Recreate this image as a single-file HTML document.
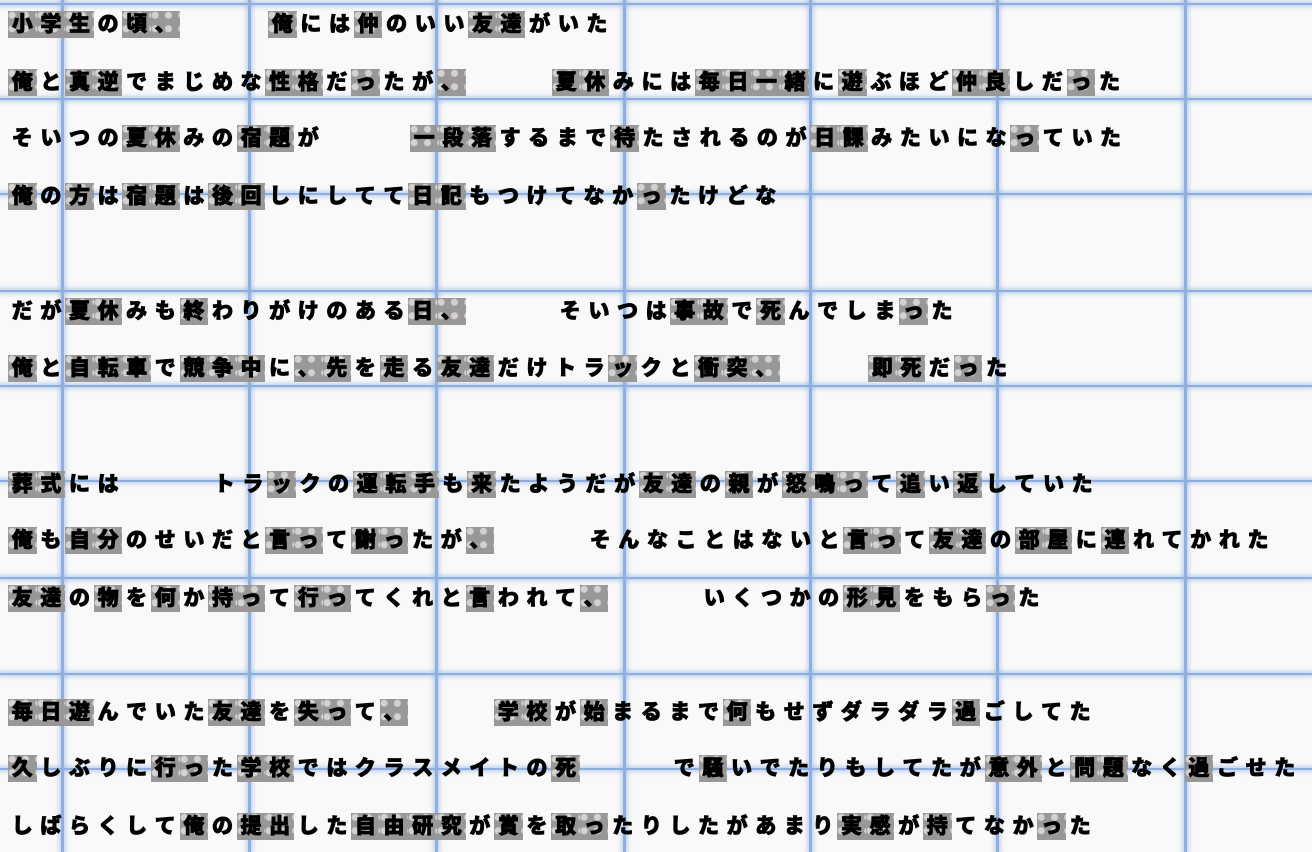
<!DOCTYPE html>
<html><head><meta charset="utf-8"><style>
html,body{margin:0;padding:0}
body{width:1312px;height:852px;overflow:hidden;position:relative;background:#f9f9f9;font-family:"Liberation Sans","Noto Sans CJK JP",sans-serif;}
.v,.h{position:absolute;background:#8eaee0;box-shadow:0 0 4px 2px rgba(150,180,225,.55)}
.v{top:0;bottom:0;width:3px}
.h{left:0;right:0;height:2px}
.row{position:absolute;height:27px;white-space:nowrap;font-size:21px;font-weight:900;color:#000}
.row span{display:inline-block;width:28.6px;height:27px;line-height:27px;text-align:center;vertical-align:top;-webkit-text-stroke:0.8px #000}
.row span.k{background-color:#9a9896;background-image:radial-gradient(circle,#d4d2d0 0,#d4d2d0 3px,rgba(0,0,0,0) 4px);background-size:13.3px 13.5px;background-position:-2.5px -2.5px}
.row span.k b{position:relative;color:#000;font-weight:900}
</style></head><body>
<div class="v" style="left:61px"></div>
<div class="v" style="left:248px"></div>
<div class="v" style="left:435px"></div>
<div class="v" style="left:623px"></div>
<div class="v" style="left:809px"></div>
<div class="v" style="left:996px"></div>
<div class="v" style="left:1184px"></div>
<div class="h" style="top:3px"></div>
<div class="h" style="top:98px"></div>
<div class="h" style="top:193px"></div>
<div class="h" style="top:290px"></div>
<div class="h" style="top:385px"></div>
<div class="h" style="top:480px"></div>
<div class="h" style="top:577px"></div>
<div class="h" style="top:673px"></div>
<div class="h" style="top:768px"></div>

<div class="row" style="top:11px;left:8px">小学生の頃、</div>
<div class="row" style="top:11px;left:268px">俺には仲のいい友達がいた</div>
<div class="row" style="top:69px;left:8px">俺と真逆でまじめな性格だったが、</div>
<div class="row" style="top:69px;left:552px">夏休みには毎日一緒に遊ぶほど仲良しだった</div>
<div class="row" style="top:125px;left:8px">そいつの夏休みの宿題が</div>
<div class="row" style="top:125px;left:410px">一段落するまで待たされるのが日課みたいになっていた</div>
<div class="row" style="top:183px;left:8px">俺の方は宿題は後回しにしてて日記もつけてなかったけどな</div>
<div class="row" style="top:298px;left:8px">だが夏休みも終わりがけのある日、</div>
<div class="row" style="top:298px;left:556px">そいつは事故で死んでしまった</div>
<div class="row" style="top:355px;left:8px">俺と自転車で競争中に、先を走る友達だけトラックと衝突、</div>
<div class="row" style="top:355px;left:868px">即死だった</div>
<div class="row" style="top:471px;left:8px">葬式には</div>
<div class="row" style="top:471px;left:210px">トラックの運転手も来たようだが友達の親が怒鳴って追い返していた</div>
<div class="row" style="top:527px;left:8px">俺も自分のせいだと言って謝ったが、</div>
<div class="row" style="top:527px;left:586px">そんなことはないと言って友達の部屋に連れてかれた</div>
<div class="row" style="top:585px;left:8px">友達の物を何か持って行ってくれと言われて、</div>
<div class="row" style="top:585px;left:700px">いくつかの形見をもらった</div>
<div class="row" style="top:699px;left:8px">毎日遊んでいた友達を失って、</div>
<div class="row" style="top:699px;left:494px">学校が始まるまで何もせずダラダラ過ごしてた</div>
<div class="row" style="top:755px;left:8px">久しぶりに行った学校ではクラスメイトの死</div>
<div class="row" style="top:755px;left:670px">で騒いでたりもしてたが意外と問題なく過ごせた</div>
<div class="row" style="top:813px;left:8px">しばらくして俺の提出した自由研究が賞を取ったりしたがあまり実感が持てなかった</div>
<script>
document.querySelectorAll('.row').forEach(function(r){
  var t=r.textContent,h='';
  for(var i=0;i<t.length;i++){
    var c=t[i];
    var k=/[\u4e00-\u9fff\u3005っッ、]/.test(c);
    h+= k?'<span class="k"><b>'+c+'</b></span>':'<span>'+c+'</span>';
  }
  r.innerHTML=h;
});
</script>
</body></html>
